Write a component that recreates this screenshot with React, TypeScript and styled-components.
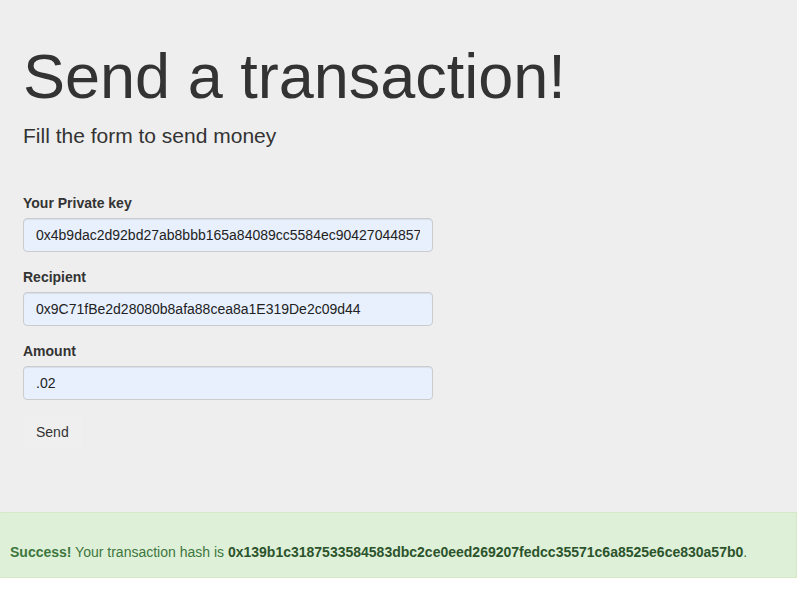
import styled, { createGlobalStyle } from 'styled-components'

const GlobalStyle = createGlobalStyle`
    * {
        box-sizing: border-box;
    }
    body {
        margin: 0;
        background: #fff;
        color: #333;
        font-family: "Liberation Sans", Arial, Helvetica, sans-serif;
        font-size: 14px;
        line-height: 1.42857;
    }
`

const Jumbotron = styled.div`
    background: #eee;
    padding: 42px 23px 48px;
`

const Title = styled.h1`
    margin: 0 0 10px;
    font-size: 63px;
    font-weight: 500;
    line-height: 1.1;
    color: #333;
`

const Lead = styled.p`
    margin: 0 0 42px;
    font-size: 21px;
    font-weight: 200;
    line-height: 30px;
`

const Form = styled.form`
    width: 410px;
`

const FormGroup = styled.div`
    margin-bottom: 15px;
`

const Label = styled.label`
    display: block;
    margin-bottom: 5px;
    font-weight: bold;
    line-height: 20px;
`

const Input = styled.input`
    display: block;
    width: 100%;
    height: 34px;
    padding: 6px 12px;
    font-family: inherit;
    font-size: 14px;
    line-height: 20px;
    color: #222;
    background: #e8f0fe;
    border: 1px solid #ccc;
    border-radius: 4px;
    box-shadow: inset 0 1px 1px rgba(0, 0, 0, 0.075);
    outline: none;
`

const Button = styled.button`
    display: inline-block;
    height: 34px;
    padding: 6px 12px;
    font-family: inherit;
    font-size: 14px;
    line-height: 20px;
    color: #333;
    background: #efefef;
    border: 1px solid transparent;
    border-radius: 4px;
    cursor: pointer;
`

const Alert = styled.div`
    padding: 29px 9px 15px;
    background: #dff0d8;
    border: 1px solid #d6e9c6;
    border-left-color: #dff0d8;
    color: #3c763d;
    line-height: 20px;
`

const AlertLink = styled.strong`
    color: #2b542c;
`

const App = () => {
    return <>
        <GlobalStyle />
        <Jumbotron>
            <Title>Send a transaction!</Title>
            <Lead>Fill the form to send money</Lead>
            <Form onSubmit={e => e.preventDefault()}>
                <FormGroup>
                    <Label htmlFor='privateKey'>Your Private key</Label>
                    <Input id='privateKey' type='text' defaultValue='0x4b9dac2d92bd27ab8bbb165a84089cc5584ec90427044857' />
                </FormGroup>
                <FormGroup>
                    <Label htmlFor='recipient'>Recipient</Label>
                    <Input id='recipient' type='text' defaultValue='0x9C71fBe2d28080b8afa88cea8a1E319De2c09d44' />
                </FormGroup>
                <FormGroup>
                    <Label htmlFor='amount'>Amount</Label>
                    <Input id='amount' type='text' defaultValue='.02' />
                </FormGroup>
                <FormGroup>
                    <Button type='submit'>Send</Button>
                </FormGroup>
            </Form>
        </Jumbotron>
        <Alert>
            <strong>Success!</strong> Your transaction hash is <AlertLink>0x139b1c3187533584583dbc2ce0eed269207fedcc35571c6a8525e6ce830a57b0</AlertLink>.
        </Alert>
    </>
}

export default App
